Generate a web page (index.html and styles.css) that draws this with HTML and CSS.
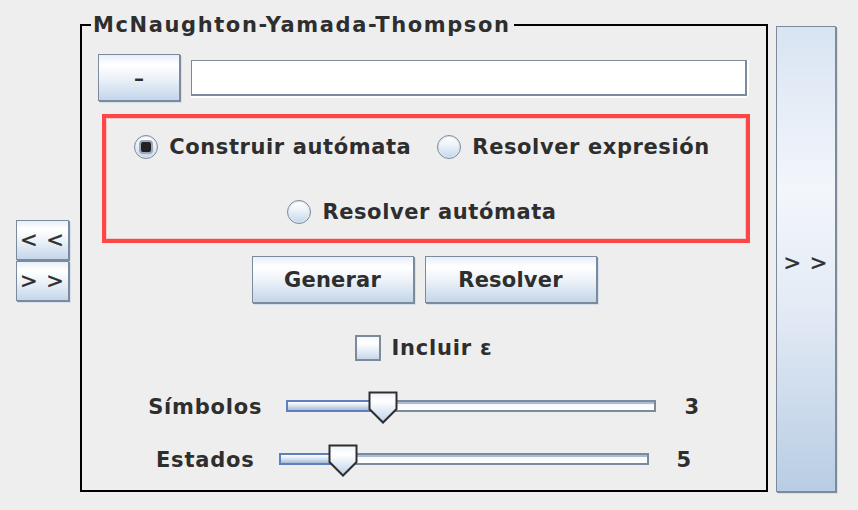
FILE: index.html
```html
<!DOCTYPE html>
<html lang="es">
<head>
<meta charset="utf-8">
<title>McNaughton-Yamada-Thompson</title>
<link rel="stylesheet" href="styles.css">
</head>
<body>
<div class="app">
  <div class="side-left">
    <button class="btn nav">&lt; &lt;</button>
    <button class="btn nav">&gt; &gt;</button>
  </div>
  <fieldset class="panel">
    <legend class="panel-title">McNaughton-Yamada-Thompson</legend>
    <div class="row-input">
      <button class="btn minus">–</button>
      <div class="field"></div>
    </div>
    <div class="choices">
      <div class="choice-row">
        <span class="choice"><span class="radio checked"></span><span class="choice-text">Construir autómata</span></span>
        <span class="choice"><span class="radio"></span><span class="choice-text">Resolver expresión</span></span>
      </div>
      <div class="choice-row second">
        <span class="choice"><span class="radio"></span><span class="choice-text">Resolver autómata</span></span>
      </div>
    </div>
    <div class="actions">
      <button class="btn action gen">Generar</button>
      <button class="btn action res">Resolver</button>
    </div>
    <div class="check-row">
      <span class="checkbox"></span><span class="check-text">Incluir ε</span>
    </div>
    <div class="slider-row first">
      <span class="slider-label">Símbolos</span>
      <div class="slider">
        <div class="track">
          <div class="track-fill" style="width: 26%"></div>
        </div>
        <svg class="thumb" style="left: 26%" width="30" height="33" viewBox="0 0 30 33">
          <defs>
            <linearGradient id="tg1" x1="0" y1="0" x2="0" y2="1">
              <stop offset="0" stop-color="#eef3fa"/>
              <stop offset="0.3" stop-color="#ffffff"/>
              <stop offset="1" stop-color="#bcd0e8"/>
            </linearGradient>
          </defs>
          <path d="M1.5 1.5 H28.5 V18 L15 31.5 L1.5 18 Z" fill="url(#tg1)" stroke="#2e2e2e" stroke-width="2"/>
        </svg>
      </div>
      <span class="slider-value">3</span>
    </div>
    <div class="slider-row second">
      <span class="slider-label">Estados</span>
      <div class="slider">
        <div class="track">
          <div class="track-fill" style="width: 17.3%"></div>
        </div>
        <svg class="thumb" style="left: 17.3%" width="30" height="33" viewBox="0 0 30 33">
          <defs>
            <linearGradient id="tg2" x1="0" y1="0" x2="0" y2="1">
              <stop offset="0" stop-color="#eef3fa"/>
              <stop offset="0.3" stop-color="#ffffff"/>
              <stop offset="1" stop-color="#bcd0e8"/>
            </linearGradient>
          </defs>
          <path d="M1.5 1.5 H28.5 V18 L15 31.5 L1.5 18 Z" fill="url(#tg2)" stroke="#2e2e2e" stroke-width="2"/>
        </svg>
      </div>
      <span class="slider-value">5</span>
    </div>
  </fieldset>
  <button class="btn big">&gt; &gt;</button>
</div>
</body>
</html>
```

FILE: styles.css
```css
html, body {
  margin: 0;
  padding: 0;
}
body {
  background: #eeeeee;
  font-family: "DejaVu Sans", "Liberation Sans", sans-serif;
  font-weight: bold;
  color: #2e2e2e;
  width: 858px;
  height: 510px;
  overflow: hidden;
}
.app {
  display: flex;
  align-items: flex-start;
  height: 510px;
}
.btn {
  font-family: "DejaVu Sans", "Liberation Sans", sans-serif;
  font-weight: bold;
  color: #2e2e2e;
  border: 1px solid #7b8b9b;
  box-shadow: 1px 1px 0 #7b8b9b, 2px 2px 0 #d6e0ec;
  background: linear-gradient(#e8eff8 0%, #ffffff 22%, #eef3f9 50%, #c4d6ea 100%);
  padding: 0;
  margin: 0;
  box-sizing: border-box;
  cursor: default;
}
.side-left {
  display: flex;
  flex-direction: column;
  gap: 1px;
  padding-left: 16px;
  margin-top: 220px;
  width: 54px;
}
.nav {
  width: 53px;
  height: 40px;
  font-size: 21px;
  font-weight: normal;
  letter-spacing: 1px;
  -webkit-text-stroke: 0.4px #2e2e2e;
}
.panel {
  margin: 14px 0 0 10px;
  padding: 0;
  width: 688px;
  height: 478px;
  box-sizing: border-box;
  border: 2px solid #000;
  min-width: 0;
}
.panel-title {
  margin-left: 9px;
  padding: 0 3px 0 2px;
  font-size: 21px;
  line-height: 22px;
  letter-spacing: 1.6px;
  color: #2e2e2e;
}
.row-input {
  display: flex;
  align-items: center;
  margin: 18px 0 0 16px;
}
.minus {
  width: 82px;
  height: 47px;
  font-size: 20px;
}
.field {
  margin-left: 11px;
  width: 556px;
  height: 36px;
  background: #fff;
  border-top: 1px solid #7b8b9b;
  border-left: 1px solid #7b8b9b;
  border-right: 2px solid #7b8b9b;
  border-bottom: 2px solid #7b8b9b;
  box-sizing: border-box;
  box-shadow: 0 2px 0 #fff, 2px 0 0 #fff;
}
.choices {
  margin: 13px 0 0 20px;
  width: 648px;
  height: 129px;
  box-sizing: border-box;
  border: 4px solid #ff4646;
  box-shadow: inset 0 0 0 1px #f2c9c9;
  padding: 14px 8px 0 0;
}
.choice-row {
  display: flex;
  justify-content: center;
  gap: 26px;
  height: 30px;
  align-items: center;
}
.choice-row.second {
  margin-top: 35px;
}
.choice {
  display: flex;
  align-items: center;
  gap: 11px;
  font-size: 21px;
  line-height: 30px;
  letter-spacing: 0.6px;
}
.radio {
  width: 22px;
  height: 22px;
  border-radius: 50%;
  border: 1px solid #7b8b9b;
  background: linear-gradient(#ffffff 0%, #eef3f9 40%, #c4d6ea 100%);
  box-shadow: inset 0 0 0 1px #dfe7f1;
  display: flex;
  align-items: center;
  justify-content: center;
}
.radio.checked::after {
  content: "";
  width: 10px;
  height: 10px;
  border-radius: 2px;
  background: #222;
  box-shadow: 0 0 0 2px #9aa8b8;
}
.actions {
  display: flex;
  justify-content: center;
  gap: 11px;
  margin-top: 13px;
}
.action {
  height: 47px;
  font-size: 21px;
  letter-spacing: 0.2px;
}
.gen { width: 162px; }
.res { width: 172px; }
.check-row {
  display: flex;
  justify-content: center;
  align-items: center;
  gap: 10px;
  margin-top: 30px;
  height: 30px;
  font-size: 21px;
  letter-spacing: 0.8px;
}
.checkbox {
  width: 26px;
  height: 26px;
  box-sizing: border-box;
  border: 2px solid #7b8b9b;
  background: linear-gradient(#f4f7fb 0%, #ffffff 30%, #c8d8ea 100%);
}
.slider-row {
  display: flex;
  justify-content: center;
  align-items: center;
  height: 32px;
  font-size: 21px;
  letter-spacing: 0.8px;
}
.slider-row.first { margin-top: 28px; }
.slider-row.second { margin-top: 21px; }
.slider-label { margin-right: 24px; }
.slider-value { margin-left: 28px; }
.slider {
  position: relative;
  width: 370px;
  height: 32px;
}
.track {
  position: absolute;
  left: 0;
  right: 0;
  top: 9px;
  height: 12px;
  box-sizing: border-box;
  border: 2px solid #7b8b9b;
  background: linear-gradient(#a9bdd6 0%, #a9bdd6 25%, #f6f8fb 26%, #ffffff 100%);
}
.track-fill {
  position: absolute;
  left: -2px;
  top: -2px;
  bottom: -2px;
  border: 2px solid #5f7fc0;
  border-right: none;
  background: linear-gradient(#ffffff 0%, #dfe8f3 40%, #a8bcd6 100%);
}
.thumb {
  position: absolute;
  top: 0;
  margin-left: -15px;
}
.big {
  margin: 26px 0 0 8px;
  padding-top: 8px;
  width: 60px;
  height: 466px;
  font-size: 21px;
  font-weight: normal;
  letter-spacing: 1px;
  -webkit-text-stroke: 0.4px #2e2e2e;
  background: linear-gradient(#d8e4f2 0%, #f3f6fb 35%, #e4ebf5 60%, #b8cde4 100%);
}
```
